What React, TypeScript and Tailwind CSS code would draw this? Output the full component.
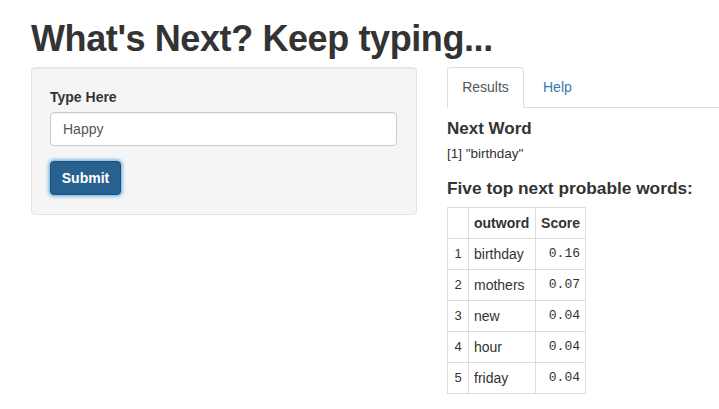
import React from "react";

const rows = [
  ["1", "birthday", "0.16"],
  ["2", "mothers", "0.07"],
  ["3", "new", "0.04"],
  ["4", "hour", "0.04"],
  ["5", "friday", "0.04"],
];

export default function App() {
  return (
    <div
      className="min-h-[409px] w-[719px] overflow-hidden bg-white text-[#333] pl-[31px]"
      style={{ fontFamily: '"Liberation Sans", Arial, sans-serif' }}
    >
      <h2 className="mt-[19px] mb-[8px] text-[36px] font-bold leading-[40px] tracking-[-0.4px] text-[#333]">
        What's Next? Keep typing...
      </h2>
      <div className="flex">
        <div className="w-[386px] shrink-0">
          <div className="h-[148px] rounded-[4px] border border-[#e3e3e3] bg-[#f5f5f5] px-[18px] pt-[19px] shadow-[inset_0_1px_1px_rgba(0,0,0,0.05)]">
            <div className="text-[14px] font-bold leading-[20px]">Type Here</div>
            <div className="mt-[5px] flex h-[34px] w-[347px] items-center rounded-[4px] border border-[#ccc] bg-white px-[12px] text-[14px] text-[#555] shadow-[inset_0_1px_1px_rgba(0,0,0,0.075)]">
              Happy
            </div>
            <div className="mt-[15px] flex h-[34px] w-[71px] items-center justify-center rounded-[4px] border border-[#204d74] bg-[#286090] text-[14px] font-bold text-white shadow-[0_0_3px_2px_rgba(102,175,233,0.75)]">
              Submit
            </div>
          </div>
        </div>
        <div className="ml-[30px] flex-1">
          <div className="flex h-[41px] border-b border-[#ddd]">
            <div className="-mb-px flex h-[41px] w-[77px] items-center justify-center rounded-t-[4px] border border-b-white border-[#ddd] bg-white text-[14px] text-[#555]">
              Results
            </div>
            <div className="flex h-[40px] items-center px-[19px] text-[14px] text-[#337ab7]">
              Help
            </div>
          </div>
          <div className="mt-[11px] text-[17px] font-bold leading-[20px]">Next Word</div>
          <div className="mt-[5px] text-[13.5px] leading-[20px]">[1] "birthday"</div>
          <div className="mt-[14px] text-[17.3px] font-bold leading-[20px]">
            Five top next probable words:
          </div>
          <table className="mt-[9px] border-collapse text-[14px]">
            <thead>
              <tr className="h-[31px]">
                <th className="w-[21px] border border-[#ddd]"></th>
                <th className="w-[67px] border border-[#ddd] px-[5px] text-left font-bold">outword</th>
                <th className="w-[50px] border border-[#ddd] px-[5px] text-right font-bold">Score</th>
              </tr>
            </thead>
            <tbody>
              {rows.map((r) => (
                <tr key={r[0]} className="h-[31px]">
                  <td className="border border-[#ddd] px-[5px] text-center text-[13px]">{r[0]}</td>
                  <td className="border border-[#ddd] px-[5px]">{r[1]}</td>
                  <td
                    className="border border-[#ddd] px-[5px] text-right text-[13px]"
                    style={{ fontFamily: '"Liberation Mono", "DejaVu Sans Mono", monospace' }}
                  >
                    {r[2]}
                  </td>
                </tr>
              ))}
            </tbody>
          </table>
        </div>
      </div>
    </div>
  );
}
